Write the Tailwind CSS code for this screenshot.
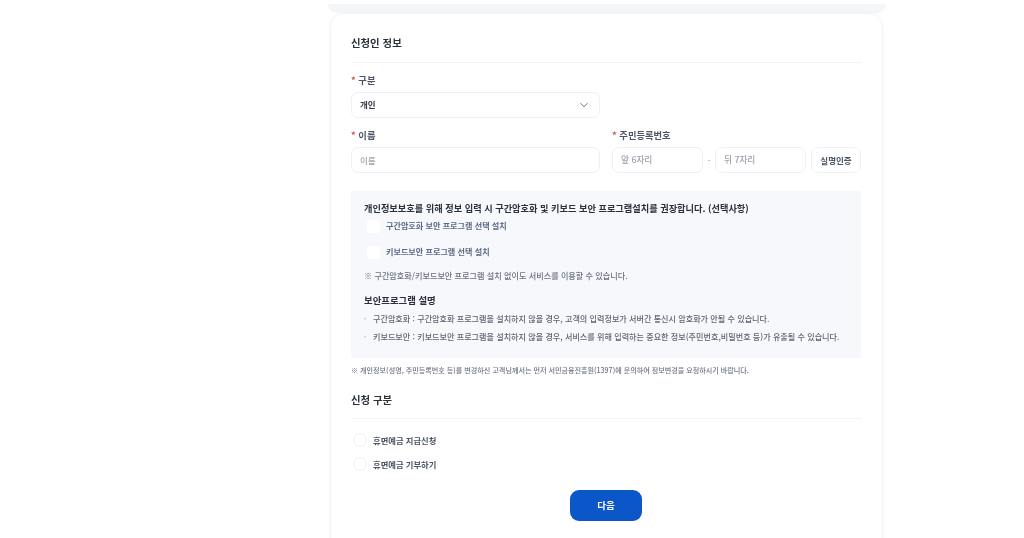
<!DOCTYPE html>
<html lang="ko">
<head>
<meta charset="utf-8">
<script src="https://cdn.jsdelivr.net/npm/@tailwindcss/browser@4"></script>
</head>
<body class="bg-white overflow-hidden">
<div class="h-[538px] overflow-hidden font-['Noto_Sans_CJK_KR','Noto_Sans',sans-serif] text-[#333a45] blur-[0.7px]">
  <div class="ml-[328px] w-[558px]">
    <div class="h-[13px] pt-[4px]"><div class="h-[9px] bg-[#f5f6f8] rounded-b-[10px]"></div></div>
    <div class="ml-[2px] w-[553px] h-[560px] bg-white rounded-[14px] border border-[#f3f4f6] shadow-[0_0_4px_rgba(0,0,0,0.03)] px-[20px]">
      <div class="h-[49px] border-b border-[#f3f4f6] pt-[19px] text-[10.4px] leading-[20px] font-bold text-[#2b313b]">신청인 정보</div>
      <div class="h-[17px] mt-[9px] text-[9.3px] leading-[17px] font-semibold text-[#4b5563]"><span class="text-[#d0584c]">*</span> 구분</div>
      <div class="mt-[3px] w-[249px] h-[26px] rounded-[7px] border border-[#eef0f4] flex items-center justify-between pl-[8px] pr-[10px]">
        <span class="text-[8.5px] leading-[12px] font-bold text-[#333a45] -mt-[2px]">개인</span>
        <svg class="w-[10px] h-[10px]" viewBox="0 0 10 10" fill="none" stroke="#6b7280" stroke-width="1"><path d="M1.5 3.2 5 6.8l3.5-3.6"/></svg>
      </div>
      <div class="flex mt-[9px]">
        <div class="w-[249px]">
          <div class="h-[17px] text-[9.3px] leading-[17px] font-semibold text-[#4b5563]"><span class="text-[#d0584c]">*</span> 이름</div>
          <div class="mt-[3px] h-[26px] rounded-[7px] border border-[#eef0f4] flex items-center pl-[8px] text-[8.5px] font-medium text-[#9ca3af]">이름</div>
        </div>
        <div class="ml-[12px] w-[249px]">
          <div class="h-[17px] text-[9.3px] leading-[17px] font-semibold text-[#4b5563]"><span class="text-[#d0584c]">*</span> 주민등록번호</div>
          <div class="mt-[3px] flex items-center">
            <div class="w-[91px] h-[26px] rounded-[7px] border border-[#eef0f4] flex items-center pl-[8px] text-[8.7px] font-medium text-[#9ca3af]">앞 6자리</div>
            <div class="w-[12px] text-center text-[8.5px] text-[#9ca3af]">-</div>
            <div class="w-[91px] h-[26px] rounded-[7px] border border-[#eef0f4] flex items-center pl-[8px] text-[8.7px] font-medium text-[#9ca3af]">뒤 7자리</div>
            <div class="ml-[5px] w-[50px] h-[26px] rounded-[7px] border border-[#eef0f4] flex items-center justify-center text-[8.5px] font-semibold text-[#4b5563]">실명인증</div>
          </div>
        </div>
      </div>
      <div class="mt-[18px] w-[510px] h-[167px] bg-[#f6f8fc] pl-[13px] pt-[9px]">
        <div class="text-[9.2px] leading-[16px] font-bold text-[#2b313b] whitespace-nowrap">개인정보보호를 위해 정보 입력 시 구간암호화 및 키보드 보안 프로그램설치를 권장합니다. (선택사항)</div>
        <div class="flex items-center h-[13px] mt-[4px] ml-[3px]">
          <div class="w-[13px] h-[13px] rounded-[3px] bg-white"></div>
          <span class="ml-[6px] text-[8.1px] font-semibold text-[#5b6b85] whitespace-nowrap">구간암호화 보안 프로그램 선택 설치</span>
        </div>
        <div class="flex items-center h-[13px] mt-[13px] ml-[3px]">
          <div class="w-[13px] h-[13px] rounded-[3px] bg-white"></div>
          <span class="ml-[6px] text-[8.1px] font-semibold text-[#5b6b85] whitespace-nowrap">키보드보안 프로그램 선택 설치</span>
        </div>
        <div class="mt-[10px] h-[14px] text-[8.13px] leading-[14px] font-medium text-[#6b7280] whitespace-nowrap">※ 구간암호화/키보드보안 프로그램 설치 없이도 서비스를 이용할 수 있습니다.</div>
        <div class="mt-[9px] h-[16px] text-[9.4px] leading-[16px] font-bold text-[#2b313b]">보안프로그램 설명</div>
        <div class="mt-[2px] flex h-[18px] items-center text-[8.1px] font-medium text-[#5f6672] whitespace-nowrap"><span class="w-[9px] text-[#9ca3af]">·</span>구간암호화 : 구간암호화 프로그램을 설치하지 않을 경우, 고객의 입력정보가 서버간 통신시 암호화가 안될 수 있습니다.</div>
        <div class="flex h-[18px] items-center text-[8.1px] font-medium text-[#5f6672] whitespace-nowrap"><span class="w-[9px] text-[#9ca3af]">·</span>키보드보안 : 키보드보안 프로그램을 설치하지 않을 경우, 서비스를 위해 입력하는 중요한 정보(주민번호,비밀번호 등)가 유출될 수 있습니다.</div>
      </div>
      <div class="mt-[5px] h-[14px] text-[7.08px] leading-[14px] font-medium text-[#6b7280] whitespace-nowrap">※ 개인정보(성명, 주민등록번호 등)를 변경하신 고객님께서는 먼저 서민금융진흥원(1397)에 문의하여 정보변경을 요청하시기 바랍니다.</div>
      <div class="mt-[5px] h-[37px] border-b border-[#f3f4f6] text-[10.4px] leading-[20px] font-bold text-[#2b313b] pt-[8px]">신청 구분</div>
      <div class="flex items-center h-[14px] mt-[14px] ml-[2px]">
        <div class="w-[14px] h-[14px] rounded-full border border-[#eef0f4]"></div>
        <span class="ml-[6px] text-[8.3px] font-semibold text-[#4b5563]">휴면예금 지급신청</span>
      </div>
      <div class="flex items-center h-[14px] mt-[10px] ml-[2px]">
        <div class="w-[14px] h-[14px] rounded-full border border-[#eef0f4]"></div>
        <span class="ml-[6px] text-[8.3px] font-semibold text-[#4b5563]">휴면예금 기부하기</span>
      </div>
      <div class="mt-[19px] ml-[219px] w-[72px] h-[31px] rounded-[9px] bg-[#0b57c9] flex items-center justify-center text-[9.5px] font-bold text-white">다음</div>
    </div>
  </div>
</div>
</body>
</html>
